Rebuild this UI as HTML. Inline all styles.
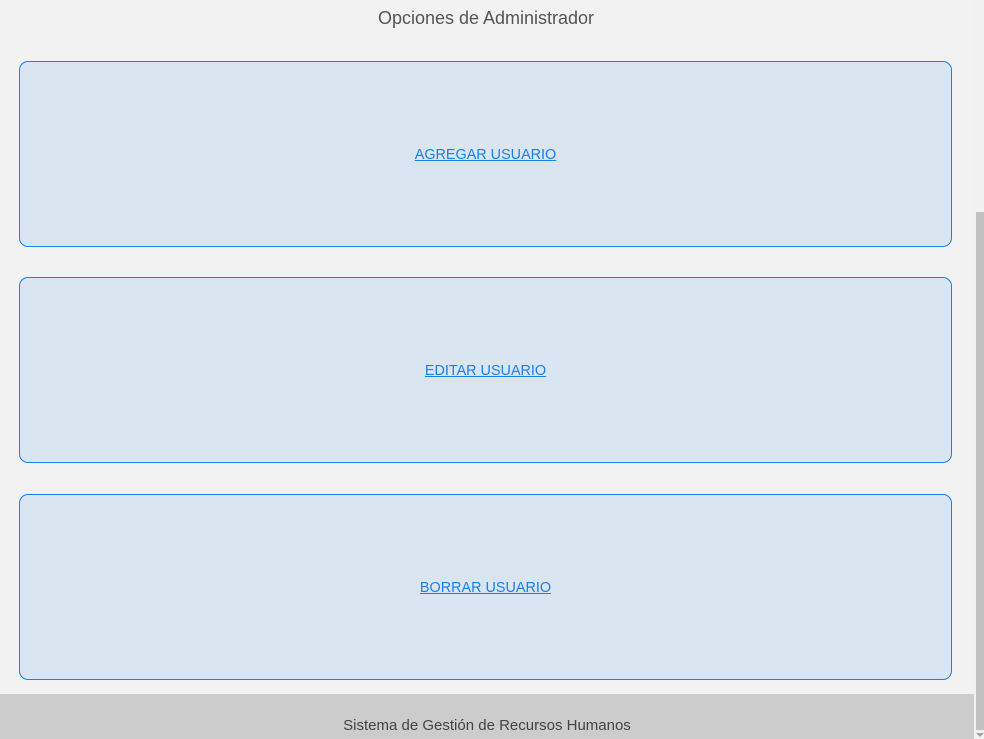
<!DOCTYPE html>
<html><head><meta charset="utf-8"><style>
html,body{margin:0;padding:0}
body{width:984px;height:739px;background:#f2f2f2;position:relative;overflow:hidden;font-family:"Liberation Sans",sans-serif}
h1{position:absolute;left:0;width:972px;top:8px;margin:0;text-align:center;font-weight:normal;font-size:18px;color:#555}
.box{position:absolute;left:19px;width:931px;height:184px;border:1px solid #1a7ff0;border-radius:9px;background:#d9e5f1;display:flex;align-items:center;justify-content:center}
.box a{color:#1a7ff0;text-decoration:underline;font-size:14.4px;padding-top:2px}
footer{position:absolute;left:0;top:694px;width:974px;height:45px;background:#cccccc;text-align:center}
footer span{position:absolute;left:0;right:0;top:23px;font-size:15px;color:#444}
.track{position:absolute;left:974px;top:0;width:10px;height:739px;background:#f1f1f1}
.thumb{position:absolute;left:976px;top:212px;width:8px;height:518px;background:#c1c1c1}
.arr{position:absolute;left:976px;top:733px;width:0;height:0;border-left:4px solid transparent;border-right:4px solid transparent;border-top:4px solid #a3a3a3}
</style></head><body>
<h1>Opciones de Administrador</h1>
<div class="box" style="top:61px"><a>AGREGAR USUARIO</a></div>
<div class="box" style="top:277px"><a>EDITAR USUARIO</a></div>
<div class="box" style="top:494px"><a>BORRAR USUARIO</a></div>
<footer><span>Sistema de Gestión de Recursos Humanos</span></footer>
<div class="track"></div><div class="thumb"></div><div class="arr"></div>
</body></html>
